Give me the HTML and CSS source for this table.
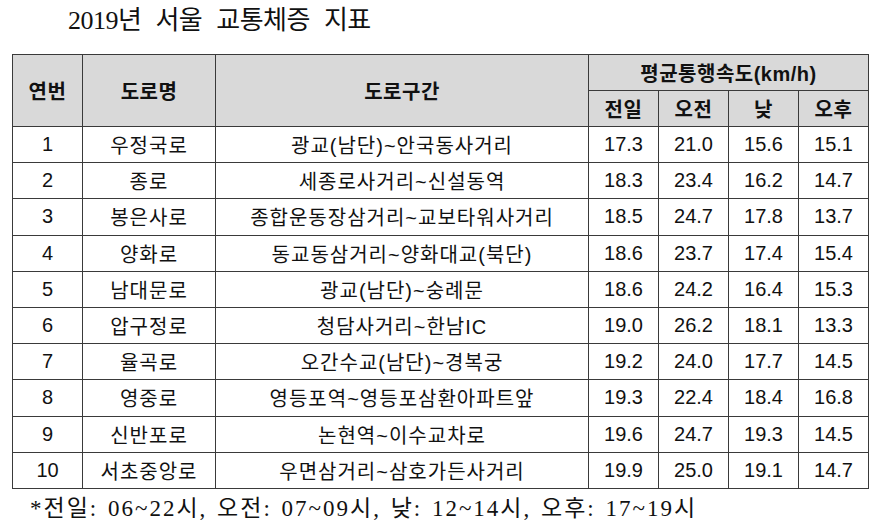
FILE: index.html
```html
<!DOCTYPE html>
<html lang="ko">
<head>
<meta charset="utf-8">
<title>2019년 서울 교통체증 지표</title>
<link rel="stylesheet" href="styles.css">
</head>
<body>
<div class="page">
  <h1 class="title">2019년 서울 교통체증 지표</h1>
  <table class="traffic">
    <colgroup>
      <col class="c-no"><col class="c-name"><col class="c-sec">
      <col class="c-num"><col class="c-num"><col class="c-num"><col class="c-num">
    </colgroup>
    <thead>
      <tr>
        <th rowspan="2">연번</th>
        <th rowspan="2">도로명</th>
        <th rowspan="2">도로구간</th>
        <th colspan="4" class="speed">평균통행속도(km/h)</th>
      </tr>
      <tr>
        <th>전일</th><th>오전</th><th>낮</th><th>오후</th>
      </tr>
    </thead>
    <tbody>
      <tr><td>1</td><td class="ko">우정국로</td><td class="ko">광교(남단)~안국동사거리</td><td>17.3</td><td>21.0</td><td>15.6</td><td>15.1</td></tr>
      <tr><td>2</td><td class="ko">종로</td><td class="ko">세종로사거리~신설동역</td><td>18.3</td><td>23.4</td><td>16.2</td><td>14.7</td></tr>
      <tr><td>3</td><td class="ko">봉은사로</td><td class="ko">종합운동장삼거리~교보타워사거리</td><td>18.5</td><td>24.7</td><td>17.8</td><td>13.7</td></tr>
      <tr><td>4</td><td class="ko">양화로</td><td class="ko">동교동삼거리~양화대교(북단)</td><td>18.6</td><td>23.7</td><td>17.4</td><td>15.4</td></tr>
      <tr><td>5</td><td class="ko">남대문로</td><td class="ko">광교(남단)~숭례문</td><td>18.6</td><td>24.2</td><td>16.4</td><td>15.3</td></tr>
      <tr><td>6</td><td class="ko">압구정로</td><td class="ko">청담사거리~한남IC</td><td>19.0</td><td>26.2</td><td>18.1</td><td>13.3</td></tr>
      <tr><td>7</td><td class="ko">율곡로</td><td class="ko">오간수교(남단)~경복궁</td><td>19.2</td><td>24.0</td><td>17.7</td><td>14.5</td></tr>
      <tr><td>8</td><td class="ko">영중로</td><td class="ko">영등포역~영등포삼환아파트앞</td><td>19.3</td><td>22.4</td><td>18.4</td><td>16.8</td></tr>
      <tr><td>9</td><td class="ko">신반포로</td><td class="ko">논현역~이수교차로</td><td>19.6</td><td>24.7</td><td>19.3</td><td>14.5</td></tr>
      <tr><td>10</td><td class="ko">서초중앙로</td><td class="ko">우면삼거리~삼호가든사거리</td><td>19.9</td><td>25.0</td><td>19.1</td><td>14.7</td></tr>
    </tbody>
  </table>
  <p class="note">*전일: 06~22시, 오전: 07~09시, 낮: 12~14시, 오후: 17~19시</p>
</div>
</body>
</html>
```

FILE: styles.css
```css
html, body {
  margin: 0;
  padding: 0;
  background: #ffffff;
}

.page {
  width: 875px;
  padding: 0 0 0 12px;
  box-sizing: border-box;
  color: #111111;
}

.title {
  margin: 0 0 12px 0;
  padding-left: 56px;
  height: 42px;
  line-height: 42px;
  font-family: "Liberation Serif", "Noto Sans CJK KR", serif;
  font-size: 26px;
  font-weight: normal;
  word-spacing: 8px;
  letter-spacing: -0.5px;
}

.traffic {
  border-collapse: collapse;
  table-layout: fixed;
  width: 855px;
  font-family: "Liberation Sans", "Noto Sans CJK KR", sans-serif;
  font-size: 20px;
  border: 1px solid #222222;
}

.c-no { width: 70px; }
.c-name { width: 133px; }
.c-sec { width: 373px; }
.c-num { width: 70px; }

.traffic th,
.traffic td {
  border: 1px solid #3a3a3a;
  text-align: center;
  vertical-align: middle;
  padding: 0;
  white-space: nowrap;
}

.traffic th {
  background: #d9d9d9;
  height: 35px;
  font-weight: bold;
  letter-spacing: 0.5px;
}

.traffic td {
  height: 35.2px;
}

.traffic td.ko {
  letter-spacing: 1px;
}

.note {
  margin: 0;
  padding-left: 18px;
  height: 36px;
  line-height: 40px;
  font-family: "Liberation Serif", "Noto Sans CJK KR", serif;
  font-size: 23px;
  letter-spacing: 2px;
  word-spacing: 2px;
  color: #111111;
}
```
